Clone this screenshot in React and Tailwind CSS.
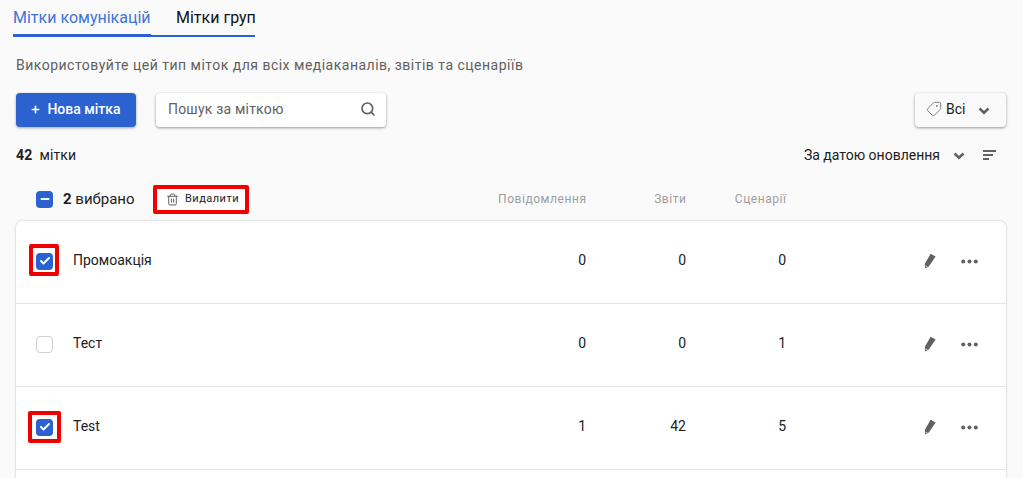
import React from 'react'
import { Search, Plus, Tag, Trash2, Check, Minus } from 'lucide-react'

const ROWS = [
  { id: 1, name: 'Промоакція', messages: 0, reports: 0, scenarios: 0, checked: true, mark: 'h-[32px] w-[30px] -left-[7px] -top-[9px]' },
  { id: 2, name: 'Тест', messages: 0, reports: 0, scenarios: 1, checked: false },
  { id: 3, name: 'Test', messages: 1, reports: 42, scenarios: 5, checked: true, mark: 'h-[32px] w-[33px] -left-[8px] -top-[8px]' },
]

function Chevron({ className }) {
  return (
    <svg width="12" height="8" viewBox="0 0 12 8" className={className}>
      <path d="M1.5 1.5 L6 5.8 L10.5 1.5" fill="none" stroke="#616161" strokeWidth="2.6" />
    </svg>
  )
}

function PencilIcon() {
  return (
    <svg width="12" height="16" viewBox="0 0 12 16" className="ml-[138px] -mt-[2px]">
      <path d="M6.6 0.8 L11.6 3.4 L4.8 13.4 L1 15.6 L0.9 10.8 Z" fill="#616161" />
      <path d="M1.8 14.6 L1.8 12.4 L3.6 13.5 Z" fill="#d8d8d8" />
    </svg>
  )
}

function DotsIcon() {
  return (
    <svg width="17" height="5" viewBox="0 0 17 5" className="ml-[25px] -mt-[2px]">
      <circle cx="2.2" cy="2.5" r="2" fill="#616161" />
      <circle cx="8.5" cy="2.5" r="2" fill="#616161" />
      <circle cx="14.8" cy="2.5" r="2" fill="#616161" />
    </svg>
  )
}

function Box({ checked }) {
  if (!checked) {
    return <span className="block h-[17px] w-[17px] rounded-[4px] border border-[#cfcfcf] bg-white" />
  }
  return (
    <span className="flex h-[17px] w-[17px] items-center justify-center rounded-[4px] bg-[#2b62d0]">
      <Check size={12} strokeWidth={4} className="text-white" />
    </span>
  )
}

function Row({ row }) {
  return (
    <div className="flex h-[83px] items-center border-b border-[#e6e6e6] pl-[20px] pr-[28px]">
      <div className="relative -mt-[2px] h-[17px] w-[17px]">
        <Box checked={row.checked} />
        {row.mark && <span className={`absolute rounded-[2px] border-[4px] border-[#f00000] ${row.mark}`} />}
      </div>
      <span className="-mt-[3px] ml-[20px] w-[200px] text-[14px] text-[#212121]">{row.name}</span>
      <span className="-mt-[4px] w-[313px] text-right text-[14px] text-[#212121]">{row.messages}</span>
      <span className="-mt-[4px] w-[100px] text-right text-[14px] text-[#212121]">{row.reports}</span>
      <span className="-mt-[4px] w-[100px] text-right text-[14px] text-[#212121]">{row.scenarios}</span>
      <PencilIcon />
      <DotsIcon />
    </div>
  )
}

export default function App() {
  return (
    <div className="h-[478px] overflow-hidden bg-[#fafafa] font-['Roboto',sans-serif] text-[#212121]">
      <div className="flex pl-[13px]">
        <div className="h-[37px] w-[138px] whitespace-nowrap border-b-[3px] border-[#2b62d0] pt-[6px] text-[16px] text-[#3f74d8]">Мітки комунікацій</div>
        <div className="h-[37px] w-[104px] whitespace-nowrap border-b-2 border-[#2b62d0] pl-[25px] pt-[6px] text-[16px] text-[#111]">Мітки груп</div>
      </div>

      <p className="mt-[18px] pl-[16px] text-[14px] leading-[20px] tracking-[0.49px] text-[#616161]">
        Використовуйте цей тип міток для всіх медіаканалів, звітів та сценаріїв
      </p>

      <div className="mt-[18px] flex items-center pl-[16px] pr-[17px]">
        <button type="button" className="flex h-[34px] w-[120px] items-center justify-center gap-[6px] rounded-[4px] bg-[#2b62d0] pb-[2px] pr-[1px] text-[14px] font-medium text-white shadow-[0_1px_3px_rgba(0,0,0,0.35)]">
          <Plus size={11} strokeWidth={3.5} />
          Нова мітка
        </button>
        <div className="ml-[20px] flex h-[34px] w-[230px] items-center justify-between rounded-[4px] bg-white pb-[2px] pl-[12px] pr-[10px] text-[14px] tracking-[0.2px] text-[#616161] shadow-[0_1px_3px_rgba(0,0,0,0.4)]">
          Пошук за міткою
          <Search size={16} strokeWidth={2.5} className="text-[#616161]" />
        </div>
        <div className="ml-auto flex h-[34px] w-[91px] items-center rounded-[4px] bg-[#fafafa] pb-[2px] pl-[11px] text-[14px] text-[#212121] shadow-[0_1px_3px_rgba(0,0,0,0.4)]">
          <Tag size={16} strokeWidth={1.2} className="-scale-x-100 text-[#616161]" />
          <span className="ml-[4px]">Всі</span>
          <Chevron className="ml-[13px] mt-[3px]" />
        </div>
      </div>

      <div className="mt-[18px] flex h-[20px] items-center pl-[16px] pr-[27px] text-[14px]">
        <span className="tracking-[0.1px]"><b className="font-bold">42</b>&nbsp;&nbsp;мітки</span>
        <span className="ml-auto">За датою оновлення</span>
        <Chevron className="ml-[13px] mt-[2px]" />
        <div className="ml-[18px] flex w-[13px] flex-col gap-[2px]">
          <span className="h-[2px] w-[13px] bg-[#616161]" />
          <span className="h-[2px] w-[10px] bg-[#616161]" />
          <span className="h-[2px] w-[6px] bg-[#616161]" />
        </div>
      </div>

      <div className="mt-[19px] flex h-[30px] items-center pl-[36px]">
        <span className="flex h-[17px] w-[17px] items-center justify-center rounded-[4px] bg-[#2b62d0]">
          <Minus size={12} strokeWidth={4} className="text-white" />
        </span>
        <span className="ml-[10px] text-[15px]"><b className="font-bold">2</b> вибрано</span>
        <button type="button" className="ml-[18px] flex h-[29px] w-[96px] items-center justify-center gap-[6px] rounded-[2px] border-[4px] border-[#f00000] bg-white pl-[4px] text-[11px] tracking-[0.5px] text-[#212121]">
          <Trash2 size={13} strokeWidth={1.7} className="text-[#555]" />
          Видалити
        </button>
        <span className="w-[338px] text-right text-[12px] tracking-[0.55px] text-[#9e9e9e]">Повідомлення</span>
        <span className="w-[100px] text-right text-[12px] tracking-[0.55px] text-[#9e9e9e]">Звіти</span>
        <span className="w-[100px] text-right text-[12px] tracking-[0.55px] text-[#9e9e9e]">Сценарії</span>
      </div>

      <div className="ml-[16px] mr-[17px] mt-[7px] rounded-[6px] bg-white shadow-[0_0_2px_rgba(0,0,0,0.3)]">
        {ROWS.map((row) => (
          <Row key={row.id} row={row} />
        ))}
        <div className="h-[83px]" />
      </div>
    </div>
  )
}
